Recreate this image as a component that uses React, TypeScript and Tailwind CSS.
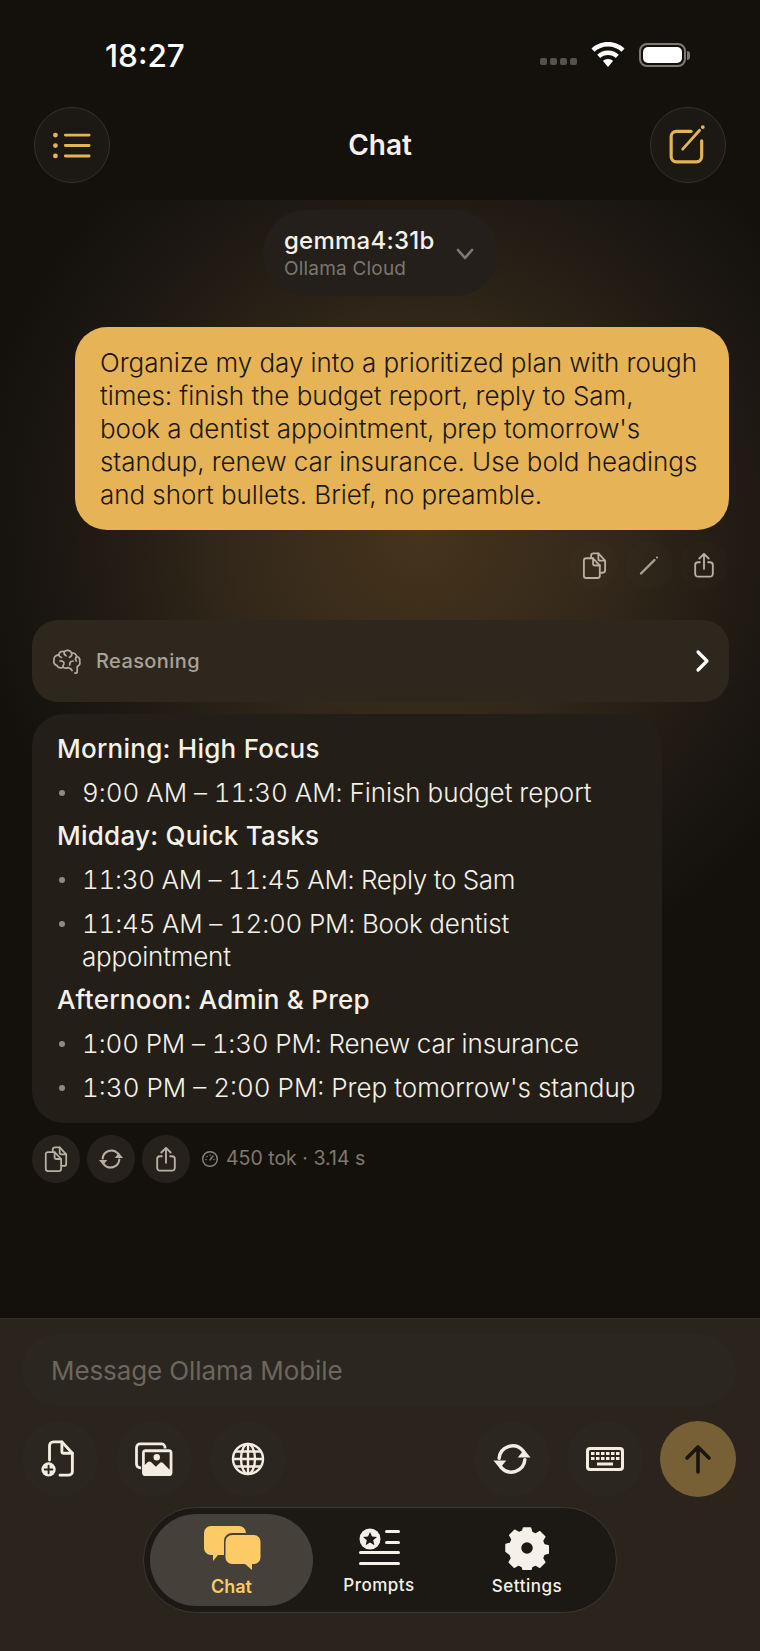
import React from "react";

const font = { fontFamily: "Inter, 'Noto Sans', sans-serif" };

function Copy({ size = 28, color = "#b8b0a4" }: { size?: number; color?: string }) {
  return (
    <svg width={size} height={size} viewBox="0 0 28 28" fill="none" stroke={color} strokeWidth="1.900" strokeLinejoin="round" strokeLinecap="round">
      <path d="M10.500 5.500V4A2.500 2.500 0 0 1 13 1.500h5l7 7.500V19a2.500 2.500 0 0 1-2.500 2.500H20.500" />
      <path d="M18 1.500V7a2 2 0 0 0 2 2h5" />
      <path d="M5.500 6.500h7l7 7.500v10.500A2.500 2.500 0 0 1 17 27H5.500A2.500 2.500 0 0 1 3 24.500V9a2.500 2.500 0 0 1 2.500-2.500Z" />
      <path d="M12.500 6.500V12a2 2 0 0 0 2 2h5" />
    </svg>
  );
}

function ShareIcon({ size = 28, color = "#b8b0a4" }: { size?: number; color?: string }) {
  return (
    <svg width={size} height={size} viewBox="0 0 28 28" fill="none" stroke={color} strokeWidth="2" strokeLinecap="round" strokeLinejoin="round">
      <path d="M14 18V2.500M9 7l5-5 5 5" />
      <path d="M9.500 11H7.500A3 3 0 0 0 4.500 14v9.500a3 3 0 0 0 3 3h13a3 3 0 0 0 3-3V14a3 3 0 0 0-3-3h-2" />
    </svg>
  );
}

function Sync({ size = 28, color = "#b8b0a4", sw = 2.2 }: { size?: number; color?: string; sw?: number }) {
  return (
    <svg width={size} height={size} viewBox="0 0 28 28" fill="none">
      <path d="M5 13.500A9.500 9.500 0 0 1 21.500 8l1 2" stroke={color} strokeWidth={sw} strokeLinecap="round" />
      <path d="M23 14.500A9.500 9.500 0 0 1 6.500 20l-1-2" stroke={color} strokeWidth={sw} strokeLinecap="round" />
      <path d="M18 12h9l-4.500-5.500Z" fill={color} transform="translate(0 1)" />
      <path d="M1 16h9l-4.500 5.500Z" fill={color} transform="translate(0 -1)" />
    </svg>
  );
}

function Brain() {
  return (
    <svg width="30" height="28" viewBox="0 0 30 28" fill="none" stroke="#b5aea2" strokeWidth="1.700" strokeLinecap="round" strokeLinejoin="round">
      <path d="M23 26c1.300.6 2.200-.2 2.200-1.500v-5c2.300-.8 3.300-3 2.500-5 .6-2.400-.7-4.500-3-5C24.200 7 22 5.500 19.700 6.200 18.400 3 14 2.500 12.300 4.800 10 3.600 7 5 6.800 7.800 3.500 8 1.500 10.300 2 13c-.8 2.500.5 5 3 5.600 1 2.200 4 3 6 1.500 1.500 1.200 3.500 1.400 5 .4l3 1.500 1 1.500" />
      <path d="M6.800 7.800c.2 1.500 1.200 2.400 2.700 2.700M12.300 4.800c-.5 1.700.2 3.200 1.700 4M8 14c1.800-.6 3.500.3 4 2M19.700 6.200c.4 1.900-.5 3.400-2.300 4.100M24.700 9.500c-1.400 1.400-1.500 3-.5 4.500M21 14c-2 .2-3.500 1.800-3.300 4M11 20.100c-.3-1 0-2 .8-2.700" />
    </svg>
  );
}

function Gauge() {
  return (
    <svg width="18" height="18" viewBox="0 0 18 18" fill="none" stroke="#8c867c" strokeWidth="1.400" strokeLinecap="round">
      <circle cx="9" cy="9" r="7.300" />
      <path d="M9 10 12 6M5 9.500h.1M6 6.500h.1M9 5h.1M13 9.500h.1" />
    </svg>
  );
}

function CircleIcon({ children }: { children: React.ReactNode }) {
  return <div className="flex h-12 w-12 items-center justify-center rounded-full bg-[#26221b]">{children}</div>;
}

function SoftCircle({ children }: { children: React.ReactNode }) {
  return <div className="flex h-12 w-12 items-center justify-center rounded-full bg-[#ffffff03]">{children}</div>;
}

function ToolButton({ children }: { children: React.ReactNode }) {
  return <div className="flex h-[76px] w-[76px] items-center justify-center rounded-full bg-[#2b2620]">{children}</div>;
}

function Bullet({ children, className }: { children: React.ReactNode; className: string }) {
  return (
    <div className="flex">
      <span className="mt-[14px] mr-[17px] ml-[2px] h-[6px] w-[6px] shrink-0 rounded-full bg-[#8f8a82]" />
      <span className={className}>{children}</span>
    </div>
  );
}

export default function App() {
  return (
    <div style={font} className="flex h-[1651px] w-[760px] flex-col overflow-hidden bg-[#14110c] text-[#f5f1e8]">
      {/* status bar */}
      <div className="flex h-[107px] shrink-0 items-start justify-between pt-[37px] pr-[70px] pl-[105px]">
        <span className="text-[31.5px] leading-[38px] font-medium text-white">18:27</span>
        <div className="flex items-center gap-[14px] pt-[5px]">
          <div className="mt-[12px] flex gap-[3px]">
            {[0, 1, 2, 3].map((i) => (
              <span key={i} className="h-[7px] w-[7px] rounded-[2px] bg-[#55524d]" />
            ))}
          </div>
          <svg width="34" height="26" viewBox="0 0 34 26" fill="white">
            <path d="M17 0c6.500 0 12.300 2.500 16.500 6.500l-3 3.300C27 6.500 22.300 4.500 17 4.500S7 6.500 3.500 9.800l-3-3.300C4.700 2.500 10.500 0 17 0Z" />
            <path d="M17 8.500c4.200 0 8 1.600 10.800 4.200l-3 3.300c-2-1.900-4.800-3-7.800-3s-5.800 1.100-7.800 3l-3-3.300C9 10.100 12.800 8.500 17 8.500Z" />
            <path d="M17 17c1.900 0 3.700.7 5 1.900L17 25l-5-6.100c1.300-1.200 3.100-1.900 5-1.900Z" />
          </svg>
          <div className="flex items-center">
            <div className="flex h-[24px] w-[47px] items-center justify-center rounded-[8px] border-2 border-[#7d7a75]">
              <div className="h-[16px] w-[39px] rounded-[5px] bg-white" />
            </div>
            <div className="ml-[1px] h-[9px] w-[3px] rounded-r-sm bg-[#7d7a75]" />
          </div>
        </div>
      </div>

      {/* header */}
      <div className="flex h-[93px] shrink-0 items-start justify-between px-[34px]">
        <div className="flex h-[76px] w-[76px] items-center justify-center rounded-full border border-[#34302a] bg-[#1c1915]">
          <svg width="38" height="29" viewBox="0 0 40 30" fill="none" stroke="#e5b454" strokeWidth="3" strokeLinecap="round">
            <path d="M13 4h25M13 15h25M13 26h25" />
            <path d="M2.500 4h.1M2.500 15h.1M2.500 26h.1" strokeWidth="5" />
          </svg>
        </div>
        <span className="mt-[19px] text-[28px] leading-[38px] font-semibold">Chat</span>
        <div className="flex h-[76px] w-[76px] items-center justify-center rounded-full border border-[#34302a] bg-[#1c1915]">
          <svg width="40" height="40" viewBox="0 0 38 38" fill="none" stroke="#e5b454" strokeWidth="3" strokeLinecap="round" strokeLinejoin="round">
            <path d="M22 6H8a5 5 0 0 0-5 5v19a5 5 0 0 0 5 5h19a5 5 0 0 0 5-5V15" />
            <path d="M14 23 30 5" strokeWidth="2.600" />
            <path d="M33 2h.1" strokeWidth="3.500" />
          </svg>
        </div>
      </div>

      {/* conversation */}
      <div className="flex min-h-0 flex-1 flex-col bg-[radial-gradient(ellipse_450px_460px_at_420px_330px,#46341c_0%,#33281a_42%,#1d1812_78%,#14110c_100%)]">
        <div className="flex justify-center pt-[10px]">
          <div className="ml-[1px] flex h-[86px] w-[235px] items-center gap-[20px] rounded-full bg-[#241f1a] pl-[21px]">
            <div>
              <div className="text-[24px] leading-[30px] font-medium tracking-[0.25px]">gemma4:31b</div>
              <div className="mt-[1px] text-[19px] leading-[24px] tracking-[0.2px] text-[#7b766d]">Ollama Cloud</div>
            </div>
            <svg width="20" height="14" viewBox="0 0 20 14" fill="none" stroke="#7e7a72" strokeWidth="2.600" strokeLinecap="round" strokeLinejoin="round" className="mt-[2px]">
              <path d="m3 3 7 8 7-8" />
            </svg>
          </div>
        </div>

        <div className="mt-[31px] mr-[31px] ml-[75px] rounded-[32px] bg-[#e6b456] py-[19px] pr-[29px] pl-[25px] text-[26px] leading-[33px] font-[350] tracking-[-0.05px] text-[#1c1710]">
          Organize my day into a prioritized plan with rough times: finish the budget report, reply to Sam, book a dentist appointment, prep tomorrow's standup, renew car insurance. Use bold headings and short bullets. Brief, no preamble.
        </div>

        <div className="mt-[11px] mr-[32px] flex items-center justify-end gap-[7px]">
          <SoftCircle><Copy size={27} /></SoftCircle>
          <SoftCircle>
            <svg width="24" height="24" viewBox="0 0 24 24" fill="none" stroke="#a8a195" strokeLinecap="round">
              <path d="M4 20.500 17.500 7" strokeWidth="2.400" />
              <path d="M20 4.500h.1" strokeWidth="2.200" />
            </svg>
          </SoftCircle>
          <SoftCircle><ShareIcon size={26} /></SoftCircle>
        </div>

        <div className="mt-[31px] mr-[31px] ml-[32px] flex h-[82px] shrink-0 items-center justify-between rounded-[26px] bg-[#2e271d] pr-[18px] pl-[20px]">
          <div className="flex items-center gap-[14px]">
            <Brain />
            <span className="text-[20px] font-medium tracking-[0.4px] text-[#a9a297]">Reasoning</span>
          </div>
          <svg width="16" height="24" viewBox="0 0 16 24" fill="none" stroke="white" strokeWidth="3.200" strokeLinecap="round" strokeLinejoin="round">
            <path d="m3 3 9 9-9 9" />
          </svg>
        </div>

        <div className="mt-[12px] ml-[32px] w-[630px] rounded-[32px] bg-[#231e18] pt-[18px] pr-[20px] pb-[19px] pl-[25px] text-[26px] leading-[33px]">
          <div className="flex flex-col gap-[10.7px]">
            <div className="font-[550] tracking-[0.25px]">Morning: High Focus</div>
            <Bullet className="font-[350] tracking-[-0.05px] tabular-nums">9:00 AM – 11:30 AM: Finish budget report</Bullet>
            <div className="font-[550] tracking-[0.25px]">Midday: Quick Tasks</div>
            <Bullet className="font-[350] tracking-[-0.3px] tabular-nums">11:30 AM – 11:45 AM: Reply to Sam</Bullet>
            <Bullet className="font-[350] tracking-[-0.2px] tabular-nums">11:45 AM – 12:00 PM: Book dentist appointment</Bullet>
            <div className="font-[550] tracking-[0.25px]">Afternoon: Admin &amp; Prep</div>
            <Bullet className="font-[350] tracking-[-0.15px] tabular-nums">1:00 PM – 1:30 PM: Renew car insurance</Bullet>
            <Bullet className="font-[350] tabular-nums">1:30 PM – 2:00 PM: Prep tomorrow's standup</Bullet>
          </div>
        </div>

        <div className="mt-[12px] ml-[32px] flex items-center gap-[7px]">
          <CircleIcon><Copy size={26} /></CircleIcon>
          <CircleIcon><Sync size={26} /></CircleIcon>
          <CircleIcon><ShareIcon size={26} /></CircleIcon>
          <div className="ml-[4px] flex items-center gap-[7px] text-[19.5px] text-[#7f796f]">
            <Gauge />
            <span>450 tok · 3.14 s</span>
          </div>
        </div>
      </div>

      {/* composer */}
      <div className="flex h-[333px] shrink-0 flex-col border-t border-[#33302a] bg-[#2a241d] pr-[24px] pl-[22px]">
        <div className="mt-[15px] flex h-[72px] items-center rounded-[36px] bg-[#2b2620] pl-[29px] text-[26px] tracking-[-0.1px] text-[#6c675e]">
          Message Ollama Mobile
        </div>
        <div className="mt-[15px] flex items-center justify-between">
          <div className="flex gap-[18px]">
            <ToolButton>
              <svg width="40" height="40" viewBox="0 0 42 42" fill="none" stroke="#f3ece0" strokeWidth="3" strokeLinejoin="round" strokeLinecap="round">
                <path d="M10 22V7a4 4 0 0 1 4-4h9l11 12v19a4 4 0 0 1-4 4H21" />
                <path d="M23 3v10a2 2 0 0 0 2 2h9" />
                <circle cx="9" cy="32" r="7.500" fill="#f3ece0" stroke="none" />
                <path d="M9 28v8M5 32h8" stroke="#2b251e" strokeWidth="2" />
              </svg>
            </ToolButton>
            <ToolButton>
              <svg width="40" height="35" viewBox="0 0 42 38" fill="none">
                <path d="M7 28H6a4 4 0 0 1-4-4V6a4 4 0 0 1 4-4h23a4 4 0 0 1 4 4v1" stroke="#f3ece0" strokeWidth="3" />
                <rect x="8" y="8" width="33" height="29" rx="4" fill="#f3ece0" />
                <path d="M11 11h27v19l-7-7a3 3 0 0 0-4 0l-4 4-5-5a3 3 0 0 0-4 0l-3 3Z" fill="#2b251e" />
                <circle cx="24" cy="16.500" r="3.500" fill="#f3ece0" />
              </svg>
            </ToolButton>
            <ToolButton>
              <svg width="34" height="34" viewBox="0 0 34 34" fill="none" stroke="#f3ece0" strokeWidth="2.400">
                <circle cx="17" cy="17" r="15" />
                <ellipse cx="17" cy="17" rx="7" ry="15" />
                <path d="M17 2v30M2 17h30M4.500 9.500h25M4.500 24.500h25" />
              </svg>
            </ToolButton>
          </div>
          <div className="flex items-center gap-[17px]">
            <ToolButton><Sync size={40} color="#f3ece0" sw={2.400} /></ToolButton>
            <ToolButton>
              <svg width="40" height="26" viewBox="0 0 40 26">
                <rect x="1" y="1" width="38" height="24" rx="4" fill="#f3ece0" />
                <rect x="4" y="4" width="32" height="18" rx="1.500" fill="#2b251e" />
                {[0, 1, 2, 3, 4, 5].map((i) => (
                  <React.Fragment key={i}>
                    <rect x={6 + i * 5} y="6" width="3.500" height="3" fill="#f3ece0" />
                    <rect x={6 + i * 5} y="11" width="3.500" height="3" fill="#f3ece0" />
                  </React.Fragment>
                ))}
                <rect x="12" y="16.500" width="16" height="3" fill="#f3ece0" />
              </svg>
            </ToolButton>
            <div className="flex h-[76px] w-[76px] items-center justify-center rounded-full bg-[#776035]">
              <svg width="32" height="32" viewBox="0 0 32 32" fill="none" stroke="#1a150e" strokeWidth="3.600" strokeLinecap="round" strokeLinejoin="round">
                <path d="M16 29V4M5 15 16 4l11 11" />
              </svg>
            </div>
          </div>
        </div>

        {/* tab bar */}
        <div className="mt-[10px] ml-[121px] flex h-[106px] w-[474px] items-center rounded-full border border-[#3c3730] bg-[#1c1813] pl-[6px]">
          <div className="flex h-[92px] w-[163px] flex-col items-center justify-center rounded-full bg-[#45413a] pt-[3px] text-[#fccb66]">
            <svg width="58" height="46" viewBox="0 0 58 46">
              <path d="M8 1h28a7 7 0 0 1 7 7v15a7 7 0 0 1-7 7H15l-5 6v-6H8a7 7 0 0 1-7-7V8a7 7 0 0 1 7-7Z" fill="#fccb66" />
              <path d="M29 8h22a8 8 0 0 1 8 8v16a8 8 0 0 1-8 8v6l-8-6H29a8 8 0 0 1-8-8V16a8 8 0 0 1 8-8Z" fill="#45413a" />
              <path d="M29 10h22a6.500 6.500 0 0 1 6.500 6.500v16A6.500 6.500 0 0 1 51 39h-2v6l-7-6H29a6.500 6.500 0 0 1-6.500-6.500v-16A6.500 6.500 0 0 1 29 10Z" fill="#fccb66" />
            </svg>
            <span className="mt-[4px] text-[18px] leading-[24px] font-semibold">Chat</span>
          </div>
          <div className="-ml-[8px] flex w-[148px] flex-col items-center pt-[3px]">
            <svg width="42" height="40" viewBox="0 0 42 40" fill="#f5f1e8">
              <circle cx="12" cy="12" r="10.500" />
              <path d="m12 5 2 4.600 5 .4-3.800 3.300 1.200 4.900L12 15.600l-4.400 2.600 1.200-4.900L5 10l5-.4Z" fill="#1c1813" />
              <rect x="27" y="3" width="15" height="3" rx="1.500" />
              <rect x="27" y="14" width="15" height="3" rx="1.500" />
              <rect x="1" y="24" width="41" height="3" rx="1.500" />
              <rect x="1" y="35" width="41" height="3" rx="1.500" />
            </svg>
            <span className="mt-[6px] text-[17px] leading-[24px] font-medium tracking-[0.5px]">Prompts</span>
          </div>
          <div className="flex w-[148px] flex-col items-center pt-[3px]">
            <svg width="44" height="44" viewBox="0 0 44 44" fill="#f5f1e8" stroke="#f5f1e8" strokeWidth="1.500" strokeLinejoin="round">
              <path fillRule="evenodd" d="M18.500 2h7l1.300 4.500 3.800 1.600 4.200-2.400 5 5-2.400 4.200 1.600 3.800 4.500 1.300v7l-4.500 1.300-1.600 3.800 2.400 4.200-5 5-4.200-2.400-3.800 1.600-1.300 4.500h-7l-1.300-4.500-3.800-1.600-4.200 2.400-5-5 2.400-4.200-1.600-3.800L1 25.500v-7l4.500-1.300 1.600-3.800-2.400-4.200 5-5 4.200 2.400 3.800-1.600ZM22 15.500a6.500 6.500 0 1 0 0 13 6.500 6.500 0 0 0 0-13Z" />
            </svg>
            <span className="mt-[4px] text-[17px] leading-[24px] font-medium tracking-[0.5px]">Settings</span>
          </div>
        </div>
      </div>
    </div>
  );
}
